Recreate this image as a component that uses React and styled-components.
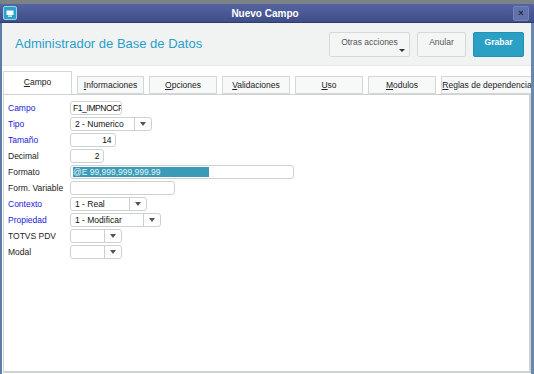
import React from "react";
import styled, { createGlobalStyle } from "styled-components";

const Global = createGlobalStyle`
  body {
    margin: 0;
    background: #8c9196;
    font-family: "Liberation Sans", Arial, sans-serif;
  }
`;

const Screen = styled.div`
  width: 534px;
  height: 374px;
  display: flex;
  flex-direction: column;
  overflow: hidden;
`;

const DesktopStrip = styled.div`
  height: 4px;
  background: #7d8286;
`;

const TitleBar = styled.div`
  height: 18px;
  display: flex;
  align-items: center;
  justify-content: space-between;
  padding: 0 5px 0 3px;
  background: linear-gradient(#5565a2, #3f4d88);
  border-bottom: 1px solid #2f3b6e;
  h1 {
    margin: 0;
    font-size: 10px;
    font-weight: bold;
    color: #ffffff;
  }
`;

const AppIcon = styled.div`
  width: 12px;
  height: 12px;
  border-radius: 2px;
  background: #2ba3c6;
  border: 1px solid #9ad3e6;
  display: flex;
  align-items: center;
  justify-content: center;
`;

const CloseBtn = styled.div`
  width: 14px;
  height: 13px;
  border-radius: 2px;
  background: #6272aa;
  border: 1px solid #7483b8;
  color: #1d2440;
  font-size: 9px;
  font-weight: bold;
  line-height: 13px;
  text-align: center;
`;

const Frame = styled.div`
  flex: 1;
  display: flex;
  flex-direction: column;
  background: #ffffff;
  border-left: 2px solid #5d7ea8;
  border-right: 3px solid #6b87ab;
`;

const Header = styled.div`
  height: 42px;
  display: flex;
  align-items: center;
  justify-content: space-between;
  padding: 0 7px 0 13px;
  background: #f1f3f3;
  border-bottom: 1px solid #e6e8e8;
  h2 {
    margin: 0 0 2px;
    font-size: 13px;
    font-weight: normal;
    color: #2a9fc9;
  }
`;

const Actions = styled.div`
  display: flex;
  gap: 7px;
`;

const Button = styled.div`
  position: relative;
  height: 25px;
  width: ${(p) => p.$w}px;
  box-sizing: border-box;
  border-radius: 2px;
  border: 1px solid ${(p) => (p.$primary ? "#2391b4" : "#d6d9da")};
  background: ${(p) => (p.$primary ? "#2aa0c5" : "#f4f5f5")};
  color: ${(p) => (p.$primary ? "#ffffff" : "#555")};
  font-size: 8.5px;
  font-weight: ${(p) => (p.$primary ? "bold" : "normal")};
  display: flex;
  align-items: center;
  justify-content: center;
  padding-bottom: 4px;
`;

const Caret = styled.span`
  position: absolute;
  right: 4px;
  bottom: 4px;
  width: 0;
  height: 0;
  border-left: 3px solid transparent;
  border-right: 3px solid transparent;
  border-top: 3px solid #333;
`;

const TabRow = styled.div`
  display: flex;
  align-items: flex-end;
  gap: 5px;
  padding: 5px 0 0 1px;
  height: 23px;
  overflow: hidden;
`;

const Tab = styled.div`
  width: ${(p) => p.$w || 67}px;
  height: ${(p) => (p.$active ? 23 : 18)}px;
  box-sizing: border-box;
  flex-shrink: 0;
  white-space: nowrap;
  border: 1px solid #d4d7d8;
  border-bottom: ${(p) => (p.$active ? "none" : "1px solid #d4d7d8")};
  background: ${(p) => (p.$active ? "#ffffff" : "#f7f8f8")};
  font-size: 8.5px;
  color: #222;
  display: flex;
  align-items: center;
  justify-content: center;
  padding-bottom: ${(p) => (p.$active ? 3 : 0)}px;
  u {
    text-decoration: underline;
  }
`;

const Panel = styled.div`
  flex: 1;
  margin: 0 0 1px 1px;
  border: 1px solid #cfd2d3;
  border-right-width: 2px;
  border-bottom-width: 2px;
  background: #ffffff;
  padding: 6px 0 0 4px;
  display: flex;
  flex-direction: column;
  gap: 2px;
`;

const Row = styled.div`
  display: flex;
  align-items: center;
  height: 14px;
`;

const Label = styled.div`
  width: 62px;
  font-size: 8.5px;
  color: ${(p) => (p.$req ? "#2020d8" : "#222")};
`;

const Input = styled.div`
  width: ${(p) => p.$w}px;
  height: 14px;
  box-sizing: border-box;
  border: 1px solid #cdd0d1;
  border-radius: 3px;
  background: #fff;
  font-size: 8.5px;
  letter-spacing: -0.4px;
  color: #111;
  display: flex;
  align-items: center;
  justify-content: ${(p) => (p.$right ? "flex-end" : "flex-start")};
  padding: 0 ${(p) => (p.$right ? 4 : 2)}px 0 2px;
  white-space: nowrap;
  overflow: hidden;
`;

const Selected = styled.span`
  background: #3a9bb6;
  color: #e8f4f8;
  letter-spacing: 0;
  width: 136px;
  height: 10px;
  line-height: 10px;
`;

const Select = styled.div`
  width: ${(p) => p.$w}px;
  height: 14px;
  box-sizing: border-box;
  border: 1px solid #cdd0d1;
  border-radius: 3px;
  background: #fff;
  display: flex;
  font-size: 8.5px;
  color: #111;
  span {
    flex: 1;
    padding-left: 4px;
    display: flex;
    align-items: center;
  }
`;

const Arrow = styled.div`
  width: 16px;
  border-left: 1px solid #cdd0d1;
  display: flex;
  align-items: center;
  justify-content: center;
  &::after {
    content: "";
    border-left: 3px solid transparent;
    border-right: 3px solid transparent;
    border-top: 4px solid #555;
  }
`;

const tabs = [
  { t: "Campo", k: "C", active: true, w: 69 },
  { t: "Informaciones", k: "I" },
  { t: "Opciones", k: "O", w: 68 },
  { t: "Validaciones", k: "V", w: 68 },
  { t: "Uso", k: "U", w: 68 },
  { t: "Modulos", k: "M", w: 68 },
  { t: "Reglas de dependencia", k: "R", w: 92 },
];

const Mnemonic = ({ t, k }) => (
  <span>
    <u>{k}</u>
    {t.slice(1)}
  </span>
);

export default function App() {
  return (
    <Screen>
      <Global />
      <DesktopStrip />
      <TitleBar>
        <AppIcon>
          <svg width="8" height="7" viewBox="0 0 8 7">
            <rect x="0.5" y="0.5" width="7" height="4.5" fill="#fff" />
            <rect x="2" y="5.5" width="4" height="1.2" fill="#fff" />
          </svg>
        </AppIcon>
        <h1>Nuevo Campo</h1>
        <CloseBtn>×</CloseBtn>
      </TitleBar>
      <Frame>
        <Header>
          <h2>Administrador de Base de Datos</h2>
          <Actions>
            <Button $w={81}>
              Otras acciones
              <Caret />
            </Button>
            <Button $w={49}>Anular</Button>
            <Button $w={51} $primary>
              Grabar
            </Button>
          </Actions>
        </Header>
        <TabRow>
          {tabs.map((x) => (
            <Tab key={x.t} $active={x.active} $w={x.w}>
              <Mnemonic t={x.t} k={x.k} />
            </Tab>
          ))}
        </TabRow>
        <Panel>
          <Row>
            <Label $req>Campo</Label>
            <Input $w={52}>F1_IMPNOCF</Input>
          </Row>
          <Row>
            <Label $req>Tipo</Label>
            <Select $w={82}>
              <span>2 - Numerico</span>
              <Arrow />
            </Select>
          </Row>
          <Row>
            <Label $req>Tamaño</Label>
            <Input $w={46} $right>
              14
            </Input>
          </Row>
          <Row>
            <Label>Decimal</Label>
            <Input $w={34} $right>
              2
            </Input>
          </Row>
          <Row>
            <Label>Formato</Label>
            <Input $w={224}>
              <Selected>@E 99,999,999,999.99</Selected>
            </Input>
          </Row>
          <Row>
            <Label>Form. Variable</Label>
            <Input $w={105} />
          </Row>
          <Row>
            <Label $req>Contexto</Label>
            <Select $w={77}>
              <span>1 - Real</span>
              <Arrow />
            </Select>
          </Row>
          <Row>
            <Label $req>Propiedad</Label>
            <Select $w={91}>
              <span>1 - Modificar</span>
              <Arrow />
            </Select>
          </Row>
          <Row>
            <Label>TOTVS PDV</Label>
            <Select $w={52}>
              <span />
              <Arrow />
            </Select>
          </Row>
          <Row>
            <Label>Modal</Label>
            <Select $w={52}>
              <span />
              <Arrow />
            </Select>
          </Row>
        </Panel>
      </Frame>
    </Screen>
  );
}
